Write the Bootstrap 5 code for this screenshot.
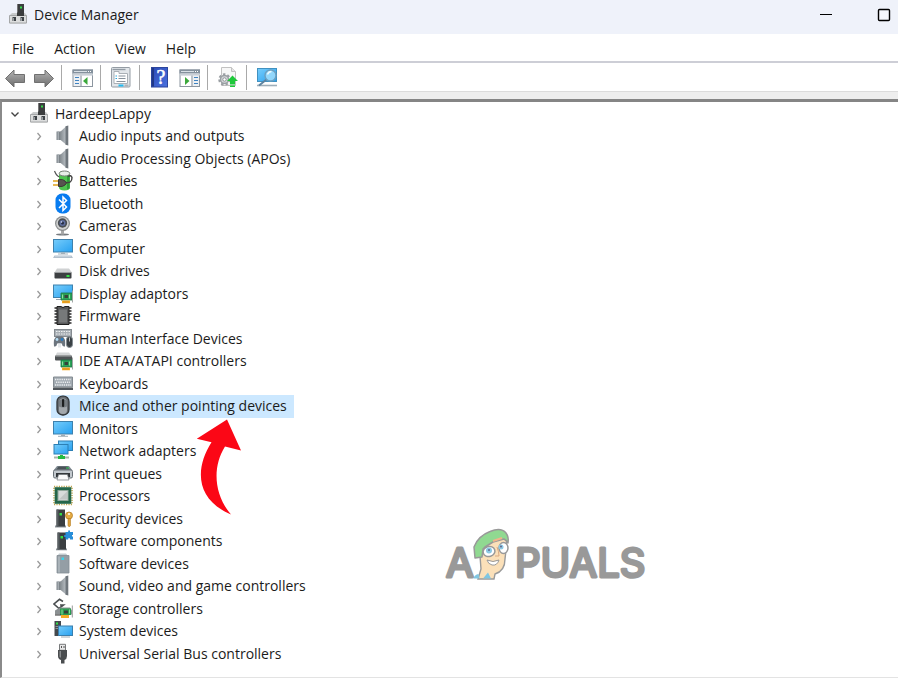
<!DOCTYPE html>
<html lang="en">
<head>
<meta charset="utf-8">
<meta name="viewport" content="width=device-width, initial-scale=1">
<title>Device Manager</title>
<link href="https://cdn.jsdelivr.net/npm/bootstrap@5.3.0/dist/css/bootstrap.min.css" rel="stylesheet">
<style>
  body { font-family: "Open Sans", "Noto Sans", sans-serif; font-size: 14px; line-height: 22px; color: #1b1b1b; background: #fff; }
  svg { display: block; flex: none; }
  button { background: none; border: 0; padding: 0; color: inherit; }
  .title-bar { background: #eff2fa; height: 34px; padding-left: 9px; }
  .title-bar h1 { font-size: 14px; line-height: 30px; margin: 0; font-weight: 400; }
  .title-icon { margin: 4px 7px 0 0; }
  .win-buttons { gap: 30px; height: 30px; }
  .win-buttons button { width: 28px; }
  .menu-bar { height: 29px; padding-left: 12px; gap: 20px; border-bottom: 2px solid #cdced6; }
  .menu-bar button { line-height: 26px; padding-top: 2px; }
  .tool-bar { height: 29px; padding: 1px 0 0 4px; gap: 7px; border-bottom: 1px solid #dcdcdc; }
  .tool-sep { width: 1px; height: 25px; background: #a9a9a9; margin: 0 3px 0 -1px; }
  .frame { background: #eeeeee; padding-top: 7px; }
  .tree-pane { background: #fff; border-top: 3px solid #858585; border-left: 2px solid #8a8a8a; border-bottom: 1px solid #e3e3e3; padding-top: 1px; }
  .tree-row { height: 22px; }
  .leaf-row:nth-child(odd) { height: 23px; }
  .root-row { padding-left: 8px; }
  .leaf-row { padding-left: 31px; }
  .twisty { width: 12px; height: 22px; color: #9a9a9a; }
  .root-row .twisty { color: #444; }
  .root-row .entry { margin-left: 8px; gap: 7px; }
  .leaf-row .entry { margin-left: 6px; padding: 0 7px 0 2px; gap: 6px; height: 100%; }
  .entry.active { background: #cce8ff; }
  .pointer-arrow { position: absolute; left: 196px; top: 419px; }
  .watermark { position: absolute; left: 440px; top: 520px; }
  .brand { font-family: Inter, sans-serif; font-weight: 400; font-size: 40px; fill: #999; stroke: #999; stroke-width: 3px; stroke-linejoin: round; stroke-linecap: round; }
</style>
</head>
<body class="d-flex flex-column min-vh-100 position-relative">

<svg width="0" height="0" class="position-absolute" aria-hidden="true">
  <defs>
    <linearGradient id="gBlue" x1="0" y1="0" x2="1" y2="1"><stop offset="0" stop-color="#77cdfb"/><stop offset="1" stop-color="#27a0f0"/></linearGradient>
    <linearGradient id="gGrey" x1="0" y1="0" x2="0" y2="1"><stop offset="0" stop-color="#b5b5b5"/><stop offset="1" stop-color="#6b6b6b"/></linearGradient>
    <linearGradient id="gMetal" x1="0" y1="0" x2="1" y2="0"><stop offset="0" stop-color="#7f868b"/><stop offset="1" stop-color="#bcc2c7"/></linearGradient>
    <linearGradient id="gHelp" x1="0" y1="0" x2="1" y2="1"><stop offset="0" stop-color="#2948b4"/><stop offset="1" stop-color="#4a72df"/></linearGradient>
    <symbol id="i-pc" viewBox="0 0 18 20"><path d="M8 0h7v12H8z" fill="#3b3d3e"/><path d="M8 0h1v12H8z" fill="#777"/><rect x="11" y="2.500" width="2" height="2" fill="#35d94a"/><path d="M1 11l2-2h13l1.500 2v8.500H.500z" fill="#c9cbcc"/><path d="M.500 11.500h17v7.500h-17z" fill="#dcdddd" stroke="#a5a7a8"/><path d="M3.500 13H7v4H3.500zM11.500 13H15v4h-3.500z" fill="#3f4448"/><path d="M4 14h1v3H4zM12 14h1v3h-1z" fill="#9ba0a4"/><path d="M8 8.500h7V12H8z" fill="#3b3d3e"/></symbol>
    <symbol id="i-speaker" viewBox="0 0 20 20"><path d="M3.500 6H8.500v8.500h-5z" fill="#7b8288"/><path d="M4.500 6h1.500v8.500H4.500z" fill="#a5acb1"/><path d="M6.500 7L13.500.500v19L6.500 13.500z" fill="url(#gMetal)"/><path d="M12.500.800L15.300 0v20l-2.800-.800z" fill="#6f767c"/></symbol>
    <symbol id="i-battery" viewBox="0 0 20 20"><path d="M6 3.500C6 1 8 .500 11.500.500S17 1.500 17 3.500V17c0 2-2 3-5.500 3S6 19 6 17z" fill="#4fc44f"/><path d="M14 5h2.500v13l-2.500 1z" fill="#2f9d37"/><ellipse cx="11.500" cy="3" rx="5.300" ry="2.500" fill="#e8eee8" stroke="#808080"/><path d="M1.500.500q2 5 5 6" stroke="#555" stroke-width="1.200" fill="none"/><path d="M13 12q6 1 6-5-1-3-4-1" stroke="#444" stroke-width="1.400" fill="none"/><path d="M5.500 9q5-.500 6.500 1.500l1.500 2-1.500 2q-2 2-6.500 1.500z" fill="#57534f" stroke="#3a3734"/><path d="M0 10.500h5M0 14.500h5" stroke="#e0a31b" stroke-width="1.600"/></symbol>
    <symbol id="i-bluetooth" viewBox="0 0 20 20"><rect x="2.500" width="15" height="20" rx="6.500" fill="#087cf0"/><path d="M6 6l7.500 7.500L10 17V3.500L13.500 7 6 14.500" fill="none" stroke="#fff" stroke-width="1.500"/></symbol>
    <symbol id="i-camera" viewBox="0 0 20 20"><ellipse cx="9.500" cy="19" rx="6.500" ry="1" fill="#777b7f"/><path d="M8 14h3v5H8z" fill="#a8a8a8"/><circle cx="9.500" cy="8" r="7.500" fill="#8c8f90"/><circle cx="9.500" cy="8" r="6.200" fill="#cfd0d0"/><circle cx="9.500" cy="7.500" r="4.700" fill="#4a4e52"/><circle cx="9.500" cy="7.500" r="3" fill="#5f6fa1"/><circle cx="9.500" cy="7.500" r="1.500" fill="#242b42"/><circle cx="8.500" cy="6.500" r=".800" fill="#dce5ff"/></symbol>
    <symbol id="i-computer" viewBox="0 0 20 20"><rect x=".500" y="1" width="19" height="12.500" fill="url(#gBlue)" stroke="#3e81ad"/><path d="M8 14h4v1.500H8z" fill="#9daab4"/><path d="M5 15.500h10" stroke="#a6b4bd"/><path d="M1.500 17h17l1.500 2.500H0z" fill="#b3c0cc"/><path d="M2 17.500h16" stroke="#d8e0e8"/></symbol>
    <symbol id="i-disk" viewBox="0 0 20 20"><path d="M4 8h12l3 4H1.500z" fill="#d0d2d3"/><rect x="1.500" y="11.500" width="17" height="6.500" rx=".800" fill="#3d4042"/><path d="M2 12h16" stroke="#9a9d9f"/><rect x="13.500" y="14.500" width="3" height="2" fill="#36df45"/></symbol>
    <symbol id="i-card" viewBox="0 0 20 20"><path d="M8 9.500h11v7H8z" fill="#2ba257" stroke="#1b7644" stroke-width=".800"/><path d="M11.500 11.500h3.500v3h-3.500z" fill="#36423b"/><path d="M9.500 11v4M16.500 11v4" stroke="#8ee0a0"/><path d="M9 17h8v3H9z" fill="#f5ad25"/><path d="M11 17.500v2M13 17.500v2M15 17.500v2" stroke="#c98318" stroke-width=".700"/><path d="M19.500 7v12" stroke="#a2a6a6"/></symbol>
    <symbol id="i-display" viewBox="0 0 20 20"><rect x=".500" y="1.500" width="19" height="12.500" fill="url(#gBlue)" stroke="#3e81ad"/><path d="M3 16h5" stroke="#9aa5ad"/><use href="#i-card" width="20" height="20"/></symbol>
    <symbol id="i-chip" viewBox="0 0 20 20"><path d="M1.500 2.500h17M1.500 5.500h17M1.500 8.500h17M1.500 11.500h17M1.500 14.500h17M1.500 17.500h17" stroke="#282828" stroke-width="1.600"/><path d="M4 1h4q2 2 4 0h4v18H4z" fill="#58595a" stroke="#1f1f1f"/><path d="M6 4h8v13H6z" fill="#77797a"/></symbol>
    <symbol id="i-hid" viewBox="0 0 20 20"><rect x="1.500" y="1" width="17" height="7" fill="#a8afb5" stroke="#858b90"/><path d="M3 3h14M3 5.500h14" stroke="#eef0f1" stroke-dasharray="1.500 1"/><path d="M1 18q-1-9 3-10h5q4 1 3 10-3 .500-3-3H4q0 3.500-3 3z" fill="#6c757e"/><circle cx="4" cy="11" r="1.400" fill="#b7dff6"/><circle cx="9" cy="11" r="1.400" fill="#287cc3"/><path d="M5 15h3v4H5z" fill="#e5e9ec"/><rect x="13.500" y="8" width="6" height="11" rx="3" fill="#3a4145" stroke="#858d92"/><path d="M16.500 9v4" stroke="#bbb"/></symbol>
    <symbol id="i-ide" viewBox="0 0 20 20"><path d="M4 2h12l3 4H2z" fill="#d4d6d7"/><rect x="2" y="5" width="17" height="5" rx="1" fill="#505456"/><path d="M2.500 5.500h16" stroke="#a6a9aa"/><use href="#i-card" width="20" height="20"/></symbol>
    <symbol id="i-keyboard" viewBox="0 0 20 20"><path d="M.500 3.500h19v10H.500z" fill="#a3abb2" stroke="#848c92"/><path d="M0 14h20v2.500H0z" fill="#50565b"/><path d="M2 6h16M2 11.500h16" stroke="#eceff1" stroke-width="1.400" stroke-dasharray="1.300 .900"/><path d="M3 8.800h14" stroke="#eceff1" stroke-width="1.400" stroke-dasharray="1.300 .900"/></symbol>
    <symbol id="i-mouse" viewBox="0 0 20 20"><rect x="4" y=".700" width="12" height="18.800" rx="5.500" fill="#686d72" stroke="#33373a" stroke-width="1.300"/><rect x="6" y="3" width="8" height="15.500" rx="4" fill="#a3a8ac"/><path d="M6 5q4-3 8 0v6q-4 2-8 0z" fill="#777d82"/><rect x="9" y="3.500" width="2.200" height="8" rx="1" fill="#1c1e1f"/></symbol>
    <symbol id="i-monitor" viewBox="0 0 20 20"><rect x=".500" y="3" width="19" height="12.500" fill="url(#gBlue)" stroke="#3e81ad"/><path d="M8 16h4v1.500H8z" fill="#9daab4"/><path d="M5 17.800h10" stroke="#a1afb8"/></symbol>
    <symbol id="i-network" viewBox="0 0 20 20"><rect x="5.500" y=".500" width="14" height="9.500" fill="url(#gBlue)" stroke="#2c7fb4"/><rect x="1" y="4" width="14" height="9.500" fill="url(#gBlue)" stroke="#2c7fb4"/><path d="M8 14v3M1 17h15" stroke="#a6b3aa" stroke-width="2"/><path d="M5 17h7M8.500 14.500v4" stroke="#25ba41" stroke-width="3"/></symbol>
    <symbol id="i-printer" viewBox="0 0 20 20"><path d="M4 2.500h12l3.500 4.500H.500z" fill="#7e8991"/><path d="M5.500 3h9l2 3h-13z" fill="#4b5358"/><rect x=".500" y="6.500" width="19" height="8" rx="1.500" fill="#c3c9ce" stroke="#697177"/><path d="M3 9.500h14v4H3z" fill="#33373a"/><path d="M5.500 11h9l1.500 5.500H4z" fill="#fafafa" stroke="#6e7478" stroke-width=".700"/><path d="M13 4.500h3" stroke="#33d45a"/></symbol>
    <symbol id="i-cpu" viewBox="0 0 20 20"><rect x="1" y="1" width="18" height="18" fill="none" stroke="#bda44e" stroke-width="1.500" stroke-dasharray="1.200 1.200"/><rect x="1.700" y="1.700" width="16.600" height="16.600" fill="#24664a"/><rect x="5" y="5" width="10" height="10" fill="#d7dbda" stroke="#91a89c"/><path d="M6 14l8-8v8z" fill="#c0c5c4"/></symbol>
    <symbol id="i-tower" viewBox="0 0 20 20"><path d="M2 17h11v2H2z" fill="#8d9499"/><path d="M3.500 1h8.500v17H3.500z" fill="#3a3e41"/><path d="M3.500 1h2v17h-2z" fill="#595f63"/><rect x="6.500" y="4.500" width="2.500" height="2.500" fill="#32dc47"/></symbol>
    <symbol id="i-security" viewBox="0 0 20 20"><use href="#i-tower" width="20" height="20"/><circle cx="16" cy="7" r="3.500" fill="#e5ac45" stroke="#b57d24" stroke-width=".800"/><circle cx="16" cy="5.500" r="1" fill="#fff"/><path d="M15 10h2.500v7l-1.300 1.500-1.200-1.500z" fill="#dfa33c" stroke="#b57d24" stroke-width=".600"/></symbol>
    <symbol id="i-component" viewBox="0 0 20 20"><path d="M3 18h11v1.800H3z" fill="#8d9499"/><path d="M4.500 2h8.500v17H4.500z" fill="#3a3e41"/><path d="M4.500 2h2v17h-2z" fill="#595f63"/><rect x="7.500" y="5.500" width="2.500" height="2.500" fill="#32dc47"/><path d="M12.500 1.500h2.700V0h1.800v1.500h3V4.500h-1v1.500h1v3h-3V7.800h-1.800V9h-2.700V6.500h-1.300v-2h1.300z" fill="#278ed9"/></symbol>
    <symbol id="i-softdev" viewBox="0 0 20 20"><path d="M6 0h7l2.500 3H4z" fill="#c3cbd0"/><path d="M4 2h12v17.500H4z" fill="#949ea5" stroke="#838d94" stroke-width=".800"/><path d="M5 3h2v16H5z" fill="#a9b2b8"/><rect x="8.500" y="4" width="2.500" height="2.500" fill="#36d5ed"/></symbol>
    <symbol id="i-storage" viewBox="0 0 20 20"><path d="M10 3L6.500.800 1 5.500l5 4.500 4.500-3.500H7" fill="none" stroke="#4b4f51" stroke-width="1.600"/><path d="M2 12l5-3h10l2 3v4H2z" fill="#8b9092"/><path d="M7 10h11v6.500H7z" fill="#2a9d52"/><path d="M2 16.500h6" stroke="#333"/><path d="M11 12h4v3h-4z" fill="#35423b"/><path d="M9 11v5M16.500 11v4" stroke="#8bd99b"/><path d="M8 16.500h8v3H8z" fill="#f4ab25"/><path d="M19.300 7v12" stroke="#999"/></symbol>
    <symbol id="i-system" viewBox="0 0 20 20"><path d="M1.500.500H8v15H1.500z" fill="#44494d"/><path d="M2.500 6h4M2.500 8h4" stroke="#8b9195"/><rect x="3" y="2" width="2" height="2" fill="#32df4b"/><rect x="5.500" y="5.500" width="14" height="9.500" fill="url(#gBlue)" stroke="#397fae"/><path d="M8 16.500h9" stroke="#9eabb4"/></symbol>
    <symbol id="i-usb" viewBox="0 0 20 20"><path d="M6.500.800h6v6h-6z" fill="#e8e8e8" stroke="#77797a"/><path d="M8 2.500h1v2H8zM10.500 2.500h1v2h-1z" fill="#555"/><path d="M5 6.500h9v6q0 3-2.500 4v3.500H8V16.500Q5 15.500 5 12.500z" fill="#4a4d4f"/><path d="M6.500 7.500H8v7L6.500 13z" fill="#898c8e"/></symbol>
    <symbol id="i-pane" viewBox="0 0 22 22"><rect x="1" y="3" width="19.500" height="16.500" fill="#edf0f3" stroke="#8c96a0"/><path d="M.500 2.500H21v4H.500z" fill="#84919d"/><path d="M2 4.500h13" stroke="#d8dfe5"/><path d="M16 4.500h4" stroke="#fff" stroke-dasharray="1 1"/><path d="M1 7.500h20" stroke="#c8cfd6" stroke-width="2"/></symbol>
    <symbol id="i-chevron" viewBox="0 0 12 22"><path d="M4.500 8l3 3.500-3 3.500" fill="none" stroke="currentColor" stroke-width="1.300"/></symbol>
  </defs>
</svg>

<header class="title-bar d-flex align-items-start justify-content-between">
  <div class="d-flex align-items-start">
    <svg width="18" height="20" class="title-icon" aria-hidden="true"><use href="#i-pc"/></svg>
    <h1>Device Manager</h1>
  </div>
  <div class="win-buttons d-flex">
    <button type="button" aria-label="Minimise"><svg width="28" height="30"><path d="M8 14.500h12" stroke="#000"/></svg></button>
    <button type="button" aria-label="Maximise"><svg width="28" height="30"><rect x="8.500" y="9.500" width="11" height="11" rx="1" fill="#f5f7fc" stroke="#000" stroke-width="1.400"/></svg></button>
  </div>
</header>

<nav class="menu-bar d-flex" aria-label="Menu">
  <button type="button">File</button>
  <button type="button">Action</button>
  <button type="button">View</button>
  <button type="button">Help</button>
</nav>

<div class="tool-bar d-flex align-items-center" role="toolbar" aria-label="Tools">
  <button type="button" aria-label="Back"><svg width="22" height="22"><path d="M1.500 11.500L10 3v4.500h10.500v8H10V20z" fill="url(#gGrey)" stroke="#707070" stroke-linejoin="round"/></svg></button>
  <button type="button" aria-label="Forward"><svg width="22" height="22"><path d="M20.500 11.500L12 3v4.500H1.500v8H12V20z" fill="url(#gGrey)" stroke="#707070" stroke-linejoin="round"/></svg></button>
  <span class="tool-sep"></span>
  <button type="button" aria-label="Show or hide console tree"><svg width="22" height="22"><use href="#i-pane"/><path d="M9 8.500v11" stroke="#8c96a0"/><path d="M3 10.500h4M3 13.500h4M3 16.500h4" stroke="#3e83c2"/><path d="M10 9h10v10H10z" fill="#fff"/><path d="M15.500 10v8l-4.500-4z" fill="#3ba83b"/></svg></button>
  <span class="tool-sep"></span>
  <button type="button" aria-label="Properties"><svg width="22" height="22"><rect x=".500" y=".500" width="18.500" height="19.500" rx="1" fill="#e2e6ea" stroke="#949ca4"/><path d="M1.500 2.500h13" stroke="#929ba4" stroke-width="1.400"/><path d="M3 6.500v-2h5v2h8.500v10H3z" fill="#fff" stroke="#aab0b6"/><path d="M7.500 9h7M7.500 11.500h7M5.500 14.500h9" stroke="#86919c"/><path d="M4.500 9H6M4.500 11.500H6" stroke="#27a7dc"/><path d="M7.500 18.500h5" stroke="#23baf0" stroke-width="2"/><path d="M13.500 18.500h4" stroke="#adb3b9" stroke-width="2"/></svg></button>
  <span class="tool-sep"></span>
  <button type="button" aria-label="Help"><svg width="22" height="22"><rect x="1.500" y=".500" width="16" height="19.500" fill="url(#gHelp)" stroke="#2b459d"/><path d="M2 1h2v18.500H2z" fill="#203888"/><text x="11" y="16.500" text-anchor="middle" font-family="Liberation Serif, serif" font-size="20" fill="#fff" stroke="#fff" stroke-width=".500">?</text></svg></button>
  <button type="button" aria-label="Show or hide action pane"><svg width="22" height="22"><use href="#i-pane"/><path d="M2 9h10v10H2z" fill="#fff"/><path d="M13 8.500v11" stroke="#8c96a0"/><path d="M15 10.500h4M15 13.500h4M15 16.500h4" stroke="#3e83c2"/><path d="M6 10v8l4.500-4z" fill="#3ba83b"/></svg></button>
  <span class="tool-sep"></span>
  <button type="button" aria-label="Update driver"><svg width="22" height="22"><path d="M3.500.500h10l4 4v14h-14z" fill="#f7f7f7" stroke="#c2c2c2"/><path d="M13.500.500v4h4" fill="#e5e5e5" stroke="#c2c2c2"/><circle cx="6.500" cy="12.500" r="5" fill="none" stroke="#9a9fa3" stroke-width="2.500" stroke-dasharray="2.300 2"/><circle cx="6.500" cy="12.500" r="4" fill="#d4d7d9" stroke="#9a9fa3" stroke-width="1.500"/><circle cx="6.500" cy="12.500" r="1.700" fill="#fff" stroke="#8d9296"/><path d="M14.500 8.500l5.500 5.500h-3v3.500h-5V14H9zM12 18.500h5v1.500h-5z" fill="#1ec83a"/></svg></button>
  <span class="tool-sep"></span>
  <button type="button" aria-label="Scan for hardware changes"><svg width="22" height="22"><rect x=".500" y="1.500" width="19" height="13" fill="url(#gBlue)" stroke="#4191c0"/><path d="M0 18.500h20" stroke="#9faeb9" stroke-width="1.600"/><path d="M9.500 12.500L2 18.500" stroke="#5d83a0" stroke-width="2"/><circle cx="13.500" cy="8.500" r="5.500" fill="#a5e0fd" fill-opacity=".800" stroke="#6c9fc0" stroke-width="1.400"/><path d="M10.500 7.500q1-3 4-3" stroke="#eefaff" fill="none" stroke-width="1.400"/></svg></button>
</div>

<div class="frame d-flex flex-column flex-grow-1">
  <main class="tree-pane flex-grow-1">
    <div class="tree-row root-row d-flex align-items-start">
      <button type="button" class="twisty" aria-label="Collapse HardeepLappy"><svg width="12" height="22"><path d="M1.500 9.500L5 13l3.500-3.500" fill="none" stroke="currentColor" stroke-width="1.400"/></svg></button>
      <div class="entry d-flex"><svg width="18" height="20" aria-hidden="true"><use href="#i-pc"/></svg><span>HardeepLappy</span></div>
    </div>
    <ul class="list-unstyled mb-0" id="devices">
      <li class="tree-row leaf-row d-flex"><button type="button" class="twisty" aria-label="Expand"><svg width="12" height="22"><use href="#i-chevron"/></svg></button><div class="entry d-flex"><svg width="20" height="21"><use href="#i-speaker"/></svg><span>Audio inputs and outputs</span></div></li>
      <li class="tree-row leaf-row d-flex"><button type="button" class="twisty" aria-label="Expand"><svg width="12" height="22"><use href="#i-chevron"/></svg></button><div class="entry d-flex"><svg width="20" height="21"><use href="#i-speaker"/></svg><span>Audio Processing Objects (APOs)</span></div></li>
      <li class="tree-row leaf-row d-flex"><button type="button" class="twisty" aria-label="Expand"><svg width="12" height="22"><use href="#i-chevron"/></svg></button><div class="entry d-flex"><svg width="20" height="21"><use href="#i-battery"/></svg><span>Batteries</span></div></li>
      <li class="tree-row leaf-row d-flex"><button type="button" class="twisty" aria-label="Expand"><svg width="12" height="22"><use href="#i-chevron"/></svg></button><div class="entry d-flex"><svg width="20" height="21"><use href="#i-bluetooth"/></svg><span>Bluetooth</span></div></li>
      <li class="tree-row leaf-row d-flex"><button type="button" class="twisty" aria-label="Expand"><svg width="12" height="22"><use href="#i-chevron"/></svg></button><div class="entry d-flex"><svg width="20" height="21"><use href="#i-camera"/></svg><span>Cameras</span></div></li>
      <li class="tree-row leaf-row d-flex"><button type="button" class="twisty" aria-label="Expand"><svg width="12" height="22"><use href="#i-chevron"/></svg></button><div class="entry d-flex"><svg width="20" height="21"><use href="#i-computer"/></svg><span>Computer</span></div></li>
      <li class="tree-row leaf-row d-flex"><button type="button" class="twisty" aria-label="Expand"><svg width="12" height="22"><use href="#i-chevron"/></svg></button><div class="entry d-flex"><svg width="20" height="21"><use href="#i-disk"/></svg><span>Disk drives</span></div></li>
      <li class="tree-row leaf-row d-flex"><button type="button" class="twisty" aria-label="Expand"><svg width="12" height="22"><use href="#i-chevron"/></svg></button><div class="entry d-flex"><svg width="20" height="21"><use href="#i-display"/></svg><span>Display adaptors</span></div></li>
      <li class="tree-row leaf-row d-flex"><button type="button" class="twisty" aria-label="Expand"><svg width="12" height="22"><use href="#i-chevron"/></svg></button><div class="entry d-flex"><svg width="20" height="21"><use href="#i-chip"/></svg><span>Firmware</span></div></li>
      <li class="tree-row leaf-row d-flex"><button type="button" class="twisty" aria-label="Expand"><svg width="12" height="22"><use href="#i-chevron"/></svg></button><div class="entry d-flex"><svg width="20" height="21"><use href="#i-hid"/></svg><span>Human Interface Devices</span></div></li>
      <li class="tree-row leaf-row d-flex"><button type="button" class="twisty" aria-label="Expand"><svg width="12" height="22"><use href="#i-chevron"/></svg></button><div class="entry d-flex"><svg width="20" height="21"><use href="#i-ide"/></svg><span>IDE ATA/ATAPI controllers</span></div></li>
      <li class="tree-row leaf-row d-flex"><button type="button" class="twisty" aria-label="Expand"><svg width="12" height="22"><use href="#i-chevron"/></svg></button><div class="entry d-flex"><svg width="20" height="21"><use href="#i-keyboard"/></svg><span>Keyboards</span></div></li>
      <li class="tree-row leaf-row d-flex"><button type="button" class="twisty" aria-label="Expand"><svg width="12" height="22"><use href="#i-chevron"/></svg></button><div class="entry active d-flex"><svg width="20" height="21"><use href="#i-mouse"/></svg><span>Mice and other pointing devices</span></div></li>
      <li class="tree-row leaf-row d-flex"><button type="button" class="twisty" aria-label="Expand"><svg width="12" height="22"><use href="#i-chevron"/></svg></button><div class="entry d-flex"><svg width="20" height="21"><use href="#i-monitor"/></svg><span>Monitors</span></div></li>
      <li class="tree-row leaf-row d-flex"><button type="button" class="twisty" aria-label="Expand"><svg width="12" height="22"><use href="#i-chevron"/></svg></button><div class="entry d-flex"><svg width="20" height="21"><use href="#i-network"/></svg><span>Network adapters</span></div></li>
      <li class="tree-row leaf-row d-flex"><button type="button" class="twisty" aria-label="Expand"><svg width="12" height="22"><use href="#i-chevron"/></svg></button><div class="entry d-flex"><svg width="20" height="21"><use href="#i-printer"/></svg><span>Print queues</span></div></li>
      <li class="tree-row leaf-row d-flex"><button type="button" class="twisty" aria-label="Expand"><svg width="12" height="22"><use href="#i-chevron"/></svg></button><div class="entry d-flex"><svg width="20" height="21"><use href="#i-cpu"/></svg><span>Processors</span></div></li>
      <li class="tree-row leaf-row d-flex"><button type="button" class="twisty" aria-label="Expand"><svg width="12" height="22"><use href="#i-chevron"/></svg></button><div class="entry d-flex"><svg width="20" height="21"><use href="#i-security"/></svg><span>Security devices</span></div></li>
      <li class="tree-row leaf-row d-flex"><button type="button" class="twisty" aria-label="Expand"><svg width="12" height="22"><use href="#i-chevron"/></svg></button><div class="entry d-flex"><svg width="20" height="21"><use href="#i-component"/></svg><span>Software components</span></div></li>
      <li class="tree-row leaf-row d-flex"><button type="button" class="twisty" aria-label="Expand"><svg width="12" height="22"><use href="#i-chevron"/></svg></button><div class="entry d-flex"><svg width="20" height="21"><use href="#i-softdev"/></svg><span>Software devices</span></div></li>
      <li class="tree-row leaf-row d-flex"><button type="button" class="twisty" aria-label="Expand"><svg width="12" height="22"><use href="#i-chevron"/></svg></button><div class="entry d-flex"><svg width="20" height="21"><use href="#i-speaker"/></svg><span>Sound, video and game controllers</span></div></li>
      <li class="tree-row leaf-row d-flex"><button type="button" class="twisty" aria-label="Expand"><svg width="12" height="22"><use href="#i-chevron"/></svg></button><div class="entry d-flex"><svg width="20" height="21"><use href="#i-storage"/></svg><span>Storage controllers</span></div></li>
      <li class="tree-row leaf-row d-flex"><button type="button" class="twisty" aria-label="Expand"><svg width="12" height="22"><use href="#i-chevron"/></svg></button><div class="entry d-flex"><svg width="20" height="21"><use href="#i-system"/></svg><span>System devices</span></div></li>
      <li class="tree-row leaf-row d-flex"><button type="button" class="twisty" aria-label="Expand"><svg width="12" height="22"><use href="#i-chevron"/></svg></button><div class="entry d-flex"><svg width="20" height="21"><use href="#i-usb"/></svg><span>Universal Serial Bus controllers</span></div></li>
    </ul>
  </main>
</div>

<svg class="pointer-arrow" width="46" height="96" viewBox="0 0 46 96" aria-hidden="true"><path d="M31 .500L.800 19.800l14.700 3.500C-1 49-1 80 35 95.500 18 76 16 48 29 27.500l16 4z" fill="#fb0716"/></svg>

<svg class="watermark" width="230" height="74" viewBox="0 0 230 74" role="img" aria-label="Appuals">
  <text class="brand" x="6" y="57">A</text>
  <g transform="translate(32 7)">
    <path d="M8 29l1 13-3 10h16l1-5q10-3 10-15l1-9 1-13L22 8 8 21z" fill="#fbe0b9" stroke="#9a9a9a" stroke-width="1.400"/>
    <path d="M1.500 51.500q1-4 5-4.500l1 4.500zM11 51.500l5-6 3 6z" fill="#7fc6e2"/>
    <path d="M3 31l-1-11Q6 9 18 4.500 29 0 34 6q3 4 2 10-2-3-4-4l-11 3-8 5-2 2-1 8z" fill="#90d991" stroke="#999" stroke-width="1.500" stroke-linejoin="round"/>
    <path d="M21 14l9-3" stroke="#f1b48b" stroke-width="2"/>
    <ellipse cx="17" cy="24.500" rx="6" ry="5" fill="#fff" stroke="#999" stroke-width="1.500" transform="rotate(-18 17 24.500)"/>
    <ellipse cx="31.500" cy="21" rx="4.500" ry="5.500" fill="#fff" stroke="#999" stroke-width="1.500"/>
    <circle cx="17" cy="23.500" r="3" fill="#8cc9e5"/><circle cx="29" cy="20" r="2.500" fill="#8cc9e5"/>
    <circle cx="17" cy="23" r="1" fill="#668"/><circle cx="29" cy="19.500" r="1" fill="#668"/>
    <path d="M25 20q2 5 2 9h-4" fill="none" stroke="#d9a982"/>
    <path d="M15 33q6 3 12 0-2 6-7 5-4-1-5-5z" fill="#fff" stroke="#999"/>
  </g>
  <text class="brand" x="75" y="57">PUALS</text>
</svg>

<script src="https://cdn.jsdelivr.net/npm/bootstrap@5.3.0/dist/js/bootstrap.bundle.min.js"></script>
</body>
</html>
